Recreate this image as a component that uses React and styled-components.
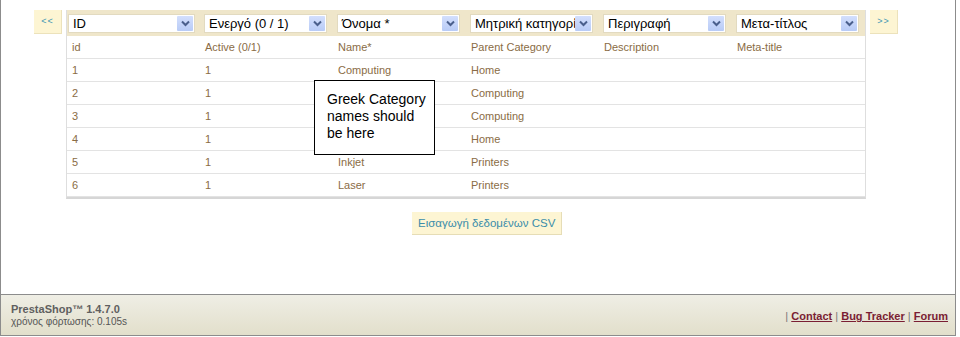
import React from 'react'
import styled, { createGlobalStyle } from 'styled-components'

const GlobalStyle = createGlobalStyle`
  html, body {
    margin: 0;
    padding: 0;
    background: #ffffff;
    font-family: 'Liberation Sans', Arial, sans-serif;
  }
`

const Frame = styled.div`
  width: 956px;
  box-sizing: border-box;
`
const Main = styled.section`
  position: relative;
  height: 294px;
  box-sizing: border-box;
  border-left: 1px solid #8c8c8c;
  border-right: 1px solid #8c8c8c;
  padding: 10px 0 0 33px;
`
const Browser = styled.div`
  display: flex;
  align-items: flex-start;
  gap: 4px;
`
const NavButton = styled.div`
  width: 28px;
  height: 24px;
  box-sizing: border-box;
  display: flex;
  justify-content: center;
  padding-top: 6px;
  background: #fdf5d3;
  border-right: 1px solid #ece2bb;
  border-bottom: 1px solid #ece2bb;
  color: #3f97b3;
  font-size: 9px;
  letter-spacing: 1px;
`
const Table = styled.div`
  width: 800px;
  box-sizing: border-box;
  border-left: 1px solid #dedede;
  border-right: 1px solid #dedede;
  border-bottom: 2px solid #d6d6d6;
`
const Row = styled.div`
  display: grid;
  grid-template-columns: repeat(6, 133px);
  height: ${p => (p.$head ? '26px' : '23px')};
  box-sizing: border-box;
  background: ${p => (p.$head ? '#efe6ca' : '#ffffff')};
  border-bottom: ${p => (p.$head ? 'none' : '1px solid #e3e3e3')};
  padding-top: ${p => (p.$head ? '4px' : '0')};
  align-items: ${p => (p.$head ? 'start' : 'center')};
`
const Cell = styled.div`
  padding-left: 5px;
  font-size: 11px;
  color: #8a6c45;
  white-space: nowrap;
`
const SelectBox = styled.div`
  margin-left: ${p => (p.$first ? '1px' : '4px')};
  width: ${p => (p.$first ? '127px' : '123px')};
  height: 19px;
  box-sizing: border-box;
  display: flex;
  align-items: center;
  background: #ffffff;
  border: 1px solid #e2dac0;
`
const SelectText = styled.span`
  flex: 1;
  padding-left: 4px;
  overflow: hidden;
  white-space: nowrap;
  font-size: 13px;
  color: #000000;
`
const Arrow = styled.span`
  width: 16px;
  height: 15px;
  margin-right: 1px;
  display: flex;
  align-items: center;
  justify-content: center;
  background: linear-gradient(#d3dffd, #b8cbf6);
  border-radius: 1px;
`
const Overlay = styled.div`
  position: absolute;
  left: 313px;
  top: 80px;
  width: 121px;
  height: 75px;
  box-sizing: border-box;
  border: 1px solid #000000;
  background: #ffffff;
  padding: 10px 4px 0 12px;
  font-size: 14px;
  line-height: 17px;
  color: #000000;
`
const ImportRow = styled.div`
  display: flex;
  padding: 13px 0 0 378px;
`
const ImportButton = styled.div`
  height: 23px;
  box-sizing: border-box;
  padding: 0 6px;
  display: flex;
  align-items: center;
  background: #fdf5d3;
  border-right: 1px solid #e6ddb6;
  border-bottom: 1px solid #e6ddb6;
  color: #3b8daa;
  font-size: 11.5px;
`
const Footer = styled.footer`
  height: 42px;
  box-sizing: border-box;
  border: 1px solid #8c8c8c;
  background: linear-gradient(#efeee5, #e2dfcb);
  display: flex;
  justify-content: space-between;
  align-items: center;
  padding: 0 7px 0 10px;
`
const Brand = styled.div`
  display: flex;
  flex-direction: column;
  gap: 1px;
`
const BrandTitle = styled.span`
  font-size: 11px;
  font-weight: bold;
  color: #5f5f5f;
`
const LoadTime = styled.span`
  font-size: 10px;
  color: #555555;
`
const Links = styled.div`
  font-size: 11px;
  color: #777777;
  padding-top: 2px;
`
const FooterLink = styled.a`
  color: #7a1e33;
  font-weight: bold;
  text-decoration: underline;
`

const Chevron = () => (
  <svg width="9" height="7" viewBox="0 0 9 7">
    <path d="M1 1.5 L4.5 5 L8 1.5" fill="none" stroke="#4a5f8c" strokeWidth="2" />
  </svg>
)

const filters = ['ID', 'Ενεργό (0 / 1)', 'Όνομα *', 'Μητρική κατηγορία', 'Περιγραφή', 'Μετα-τίτλος']
const labels = ['id', 'Active (0/1)', 'Name*', 'Parent Category', 'Description', 'Meta-title']
const rows = [
  ['1', '1', 'Computing', 'Home'],
  ['2', '1', '', 'Computing'],
  ['3', '1', '', 'Computing'],
  ['4', '1', '', 'Home'],
  ['5', '1', 'Inkjet', 'Printers'],
  ['6', '1', 'Laser', 'Printers'],
]

export default function App() {
  return (
    <Frame>
      <GlobalStyle />
      <Main>
        <Browser>
          <NavButton>&lt;&lt;</NavButton>
          <Table>
            <Row $head>
              {filters.map((f, i) => (
                <SelectBox key={f} $first={i === 0}>
                  <SelectText>{f}</SelectText>
                  <Arrow><Chevron /></Arrow>
                </SelectBox>
              ))}
            </Row>
            <Row>
              {labels.map(l => <Cell key={l}>{l}</Cell>)}
            </Row>
            {rows.map(r => (
              <Row key={r[0]}>
                {r.map((c, i) => <Cell key={i}>{c}</Cell>)}
                <Cell />
                <Cell />
              </Row>
            ))}
          </Table>
          <NavButton>&gt;&gt;</NavButton>
        </Browser>
        <ImportRow>
          <ImportButton>Εισαγωγή δεδομένων CSV</ImportButton>
        </ImportRow>
        <Overlay>Greek Category names should be here</Overlay>
      </Main>
      <Footer>
        <Brand>
          <BrandTitle>PrestaShop™ 1.4.7.0</BrandTitle>
          <LoadTime>χρόνος φόρτωσης: 0.105s</LoadTime>
        </Brand>
        <Links>
          | <FooterLink href="#contact">Contact</FooterLink> | <FooterLink href="#bugs">Bug Tracker</FooterLink> | <FooterLink href="#forum">Forum</FooterLink>
        </Links>
      </Footer>
    </Frame>
  )
}
